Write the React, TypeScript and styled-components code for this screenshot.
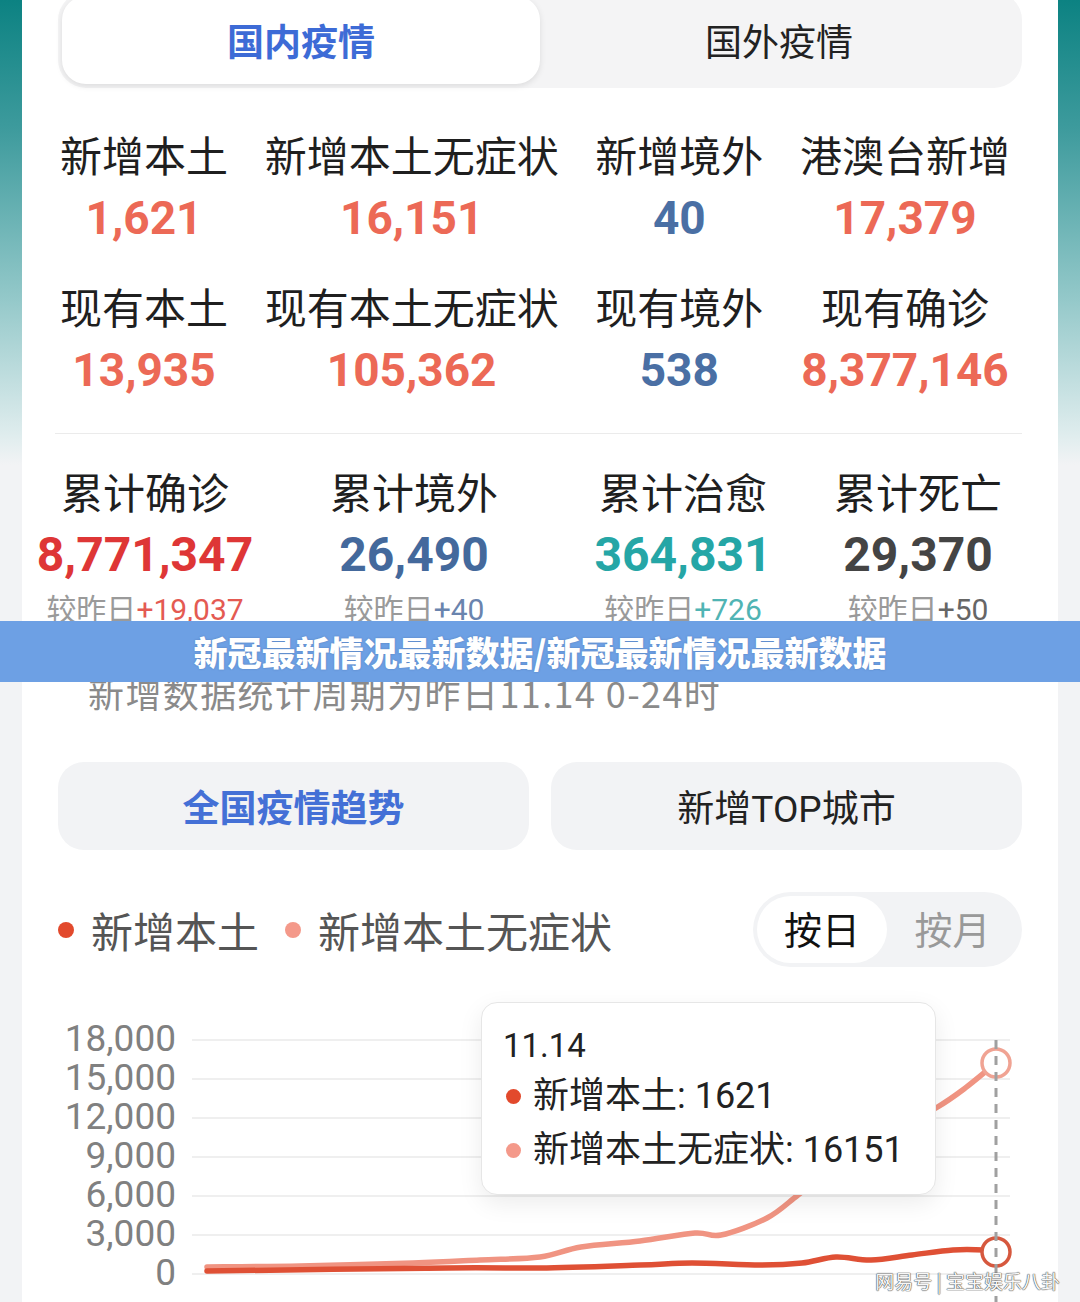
import React from 'react';
import styled, {createGlobalStyle} from 'styled-components';

const GlobalStyle = createGlobalStyle`
  html, body {
    margin: 0;
    padding: 0;
  }
  body {
    font-family: Roboto, "Noto Sans CJK SC", "Noto Sans", sans-serif;
    color: #222;
  }
`;

type Stat = {
    label: string
    value: string
    color: string
}

type Total = Stat & {
    diff: string
    diffColor: string
}

const today: Stat[] = [
    {label: '新增本土', value: '1,621', color: '#ec6956'},
    {label: '新增本土无症状', value: '16,151', color: '#ec6956'},
    {label: '新增境外', value: '40', color: '#4a6fa4'},
    {label: '港澳台新增', value: '17,379', color: '#ec6956'},
    {label: '现有本土', value: '13,935', color: '#ec6956'},
    {label: '现有本土无症状', value: '105,362', color: '#ec6956'},
    {label: '现有境外', value: '538', color: '#4a6fa4'},
    {label: '现有确诊', value: '8,377,146', color: '#ec6956'},
]

const totals: Total[] = [
    {label: '累计确诊', value: '8,771,347', color: '#de3636', diff: '+19,037', diffColor: '#e45a52'},
    {label: '累计境外', value: '26,490', color: '#44699c', diff: '+40', diffColor: '#6a84ae'},
    {label: '累计治愈', value: '364,831', color: '#25a6a6', diff: '+726', diffColor: '#50b4b4'},
    {label: '累计死亡', value: '29,370', color: '#444', diff: '+50', diffColor: '#666'},
]

const axis = ['18,000', '15,000', '12,000', '9,000', '6,000', '3,000', '0']

const lightPoints: [number, number][] = [
    [207, 1267], [300, 1266], [413, 1263], [480, 1260], [540, 1257], [581, 1247], [640, 1241],
    [695, 1233], [721, 1235], [767, 1218], [798, 1195], [830, 1170], [870, 1142], [905, 1124],
    [936, 1108], [964, 1089], [996, 1063],
]

const darkPoints: [number, number][] = [
    [207, 1271], [448, 1268], [540, 1268], [640, 1265], [692, 1263], [760, 1265], [802, 1263],
    [836, 1257], [871, 1260], [912, 1255], [953, 1250], [984, 1250], [996, 1252],
]

// catmull-rom -> bezier, keeps the lines soft like the chart lib does
const smoothPath = (pts: [number, number][]) => {
    let d = `M${pts[0][0]},${pts[0][1]}`
    for (let i = 0; i < pts.length - 1; i++) {
        const p0 = pts[i - 1] || pts[i]
        const p1 = pts[i]
        const p2 = pts[i + 1]
        const p3 = pts[i + 2] || p2
        const c1x = p1[0] + (p2[0] - p0[0]) / 6
        const c1y = p1[1] + (p2[1] - p0[1]) / 6
        const c2x = p2[0] - (p3[0] - p1[0]) / 6
        const c2y = p2[1] - (p3[1] - p1[1]) / 6
        d += ` C${c1x},${c1y} ${c2x},${c2y} ${p2[0]},${p2[1]}`
    }
    return d
}

export default function App() {
    return (
        <Page>
            <GlobalStyle/>
            <Column>
                <TabBar>
                    <Tab $active>国内疫情</Tab>
                    <Tab>国外疫情</Tab>
                </TabBar>

                <TodayGrid>
                    {today.map(s => (
                        <Cell key={s.label}>
                            <Label>{s.label}</Label>
                            <Value $color={s.color}>{s.value}</Value>
                        </Cell>
                    ))}
                </TodayGrid>

                <Divider/>

                <TotalGrid>
                    {totals.map(t => (
                        <Cell key={t.label}>
                            <Label>{t.label}</Label>
                            <Value $color={t.color} $big>{t.value}</Value>
                            <Diff>较昨日<DiffNum $color={t.diffColor}>{t.diff}</DiffNum></Diff>
                        </Cell>
                    ))}
                </TotalGrid>

                <Note>新增数据统计周期为昨日11.14 0-24时</Note>

                <ButtonRow>
                    <BigButton $active>全国疫情趋势</BigButton>
                    <BigButton>新增TOP城市</BigButton>
                </ButtonRow>

                <LegendRow>
                    <Legend>
                        <LegendItem>
                            <Dot $color={'#e2492c'}/>新增本土
                        </LegendItem>
                        <LegendItem>
                            <Dot $color={'#f4998a'}/>新增本土无症状
                        </LegendItem>
                    </Legend>
                    <Toggle>
                        <ToggleOption $active>按日</ToggleOption>
                        <ToggleOption>按月</ToggleOption>
                    </Toggle>
                </LegendRow>

                <ChartBox>
                    <svg width={1036} height={302} viewBox="22 1000 1036 302">
                        {axis.map((a, i) => {
                            const y = 1040 + i * 39
                            return (
                                <g key={a}>
                                    <line x1={192} x2={1010} y1={y} y2={y} stroke="#efefef" strokeWidth={2}/>
                                    <text x={176} y={y + 11} textAnchor="end" fontSize={37}
                                          fill="#808080" fontFamily="Roboto, sans-serif">{a}</text>
                                </g>
                            )
                        })}
                        <path d={smoothPath(lightPoints)} fill="none" stroke="#f09482" strokeWidth={5.5}
                              strokeLinecap="round" strokeLinejoin="round"/>
                        <path d={smoothPath(darkPoints)} fill="none" stroke="#df5035" strokeWidth={5.5}
                              strokeLinecap="round" strokeLinejoin="round"/>
                        <circle cx={996} cy={1063} r={14} fill="#fff" stroke="#f0a393" strokeWidth={3.5}/>
                        <circle cx={996} cy={1252} r={14} fill="#fff" stroke="#d6583e" strokeWidth={3.5}/>
                        <line x1={996} x2={996} y1={1040} y2={1302} stroke="#a0a0a0" strokeWidth={3}
                              strokeDasharray="9 7"/>
                    </svg>
                    <Tooltip>
                        <TipTitle>11.14</TipTitle>
                        <TipRow><TipDot $color={'#e2492c'}/>新增本土: 1621</TipRow>
                        <TipRow><TipDot $color={'#f4998a'}/>新增本土无症状: 16151</TipRow>
                    </Tooltip>
                </ChartBox>
            </Column>

            <Banner>新冠最新情况最新数据/新冠最新情况最新数据</Banner>
            <Watermark>网易号 | 宝宝娱乐八卦</Watermark>
        </Page>
    )
}

const Page = styled.div`
  position: relative;
  width: 1080px;
  height: 1302px;
  overflow: hidden;
  display: flex;
  justify-content: center;
  background: linear-gradient(180deg, #0c8282 0px, #3e9b9d 130px, #8fc6c7 290px, #e2eeef 440px, #f2f3f5 465px, #f2f3f5 100%);
`

const Column = styled.div`
  width: 1036px;
  height: 100%;
  background: #fff;
`

const TabBar = styled.div`
  display: flex;
  margin: -8px 36px 0;
  height: 96px;
  padding: 4px;
  box-sizing: border-box;
  border-radius: 28px;
  background: #f4f4f5;
`

const Tab = styled.div<{ $active?: boolean }>`
  flex: 1;
  display: flex;
  align-items: center;
  justify-content: center;
  border-radius: 24px;
  font-size: 37px;
  font-weight: ${p => p.$active ? 700 : 400};
  color: ${p => p.$active ? '#3d6bd6' : '#222'};
  background: ${p => p.$active ? '#fff' : 'transparent'};
  box-shadow: ${p => p.$active ? '0 2px 6px rgba(0, 0, 0, 0.1)' : 'none'};
`

const TodayGrid = styled.div`
  display: grid;
  grid-template-columns: repeat(4, auto);
  justify-content: space-between;
  row-gap: 32px;
  margin: 45px 48px 0 38px;
`

const TotalGrid = styled.div`
  display: grid;
  grid-template-columns: 246px 292px 246px 224px;
  margin-top: 36px;
`

const Cell = styled.div`
  display: flex;
  flex-direction: column;
  align-items: center;
`

const Label = styled.div`
  font-size: 42px;
  line-height: 50px;
  color: #1f1f1f;
  white-space: nowrap;
`

const Value = styled.div<{ $color: string, $big?: boolean }>`
  font-family: Roboto, "Noto Sans", sans-serif;
  font-weight: 700;
  font-size: ${p => p.$big ? 48 : 46}px;
  line-height: 70px;
  color: ${p => p.$color};
  white-space: nowrap;
`

const Diff = styled.div`
  font-size: 30px;
  line-height: 40px;
  color: #9a9a9a;
  white-space: nowrap;
`

const DiffNum = styled.span<{ $color: string }>`
  color: ${p => p.$color};
`

const Divider = styled.div`
  height: 1px;
  margin: 28px 36px 0 33px;
  background: #ebebeb;
`

const Note = styled.div`
  margin-top: 38px;
  padding-left: 66px;
  font-family: "Noto Sans CJK SC", sans-serif;
  font-size: 36px;
  line-height: 48px;
  letter-spacing: 1.4px;
  color: #8a8a8a;
`

const ButtonRow = styled.div`
  display: flex;
  gap: 22px;
  margin: 46px 36px 0;
`

const BigButton = styled.div<{ $active?: boolean }>`
  flex: 1;
  height: 88px;
  display: flex;
  align-items: center;
  justify-content: center;
  border-radius: 26px;
  background: #f2f3f5;
  font-size: 37px;
  font-weight: ${p => p.$active ? 700 : 400};
  color: ${p => p.$active ? '#4470d6' : '#222'};
`

const LegendRow = styled.div`
  display: flex;
  align-items: center;
  justify-content: space-between;
  margin: 42px 36px 0;
`

const Legend = styled.div`
  display: flex;
  align-items: center;
  gap: 26px;
`

const LegendItem = styled.div`
  display: flex;
  align-items: center;
  font-size: 42px;
  color: #555;
`

const Dot = styled.span<{ $color: string }>`
  width: 16px;
  height: 16px;
  border-radius: 50%;
  margin-right: 17px;
  background: ${p => p.$color};
`

const Toggle = styled.div`
  display: flex;
  width: 269px;
  height: 75px;
  padding: 4px;
  box-sizing: border-box;
  border-radius: 38px;
  background: #f2f3f5;
`

const ToggleOption = styled.div<{ $active?: boolean }>`
  flex: ${p => p.$active ? '0 0 130px' : 1};
  display: flex;
  align-items: center;
  justify-content: center;
  padding-bottom: 4px;
  border-radius: 34px;
  font-size: 38px;
  color: ${p => p.$active ? '#111' : '#999'};
  background: ${p => p.$active ? '#fff' : 'transparent'};
`

const ChartBox = styled.div`
  position: relative;
  margin-top: 33px;
  height: 302px;

  svg {
    display: block;
  }
`

const Tooltip = styled.div`
  position: absolute;
  left: 459px;
  top: 2px;
  width: 455px;
  height: 193px;
  box-sizing: border-box;
  padding: 20px 0 0 21px;
  background: #fff;
  border: 1px solid #e6e6e6;
  border-radius: 16px;
  box-shadow: 0 8px 24px rgba(0, 0, 0, 0.08);
`

const TipTitle = styled.div`
  font-size: 33px;
  line-height: 46px;
  color: #222;
`

const TipRow = styled.div`
  display: flex;
  align-items: center;
  font-size: 36px;
  line-height: 54px;
  color: #222;
`

const TipDot = styled.span<{ $color: string }>`
  width: 15px;
  height: 15px;
  margin: 0 12px 0 3px;
  border-radius: 50%;
  background: ${p => p.$color};
`

const Banner = styled.div`
  position: absolute;
  left: 0;
  right: 0;
  top: 621px;
  height: 61px;
  display: flex;
  align-items: center;
  justify-content: center;
  background: #6da0e4;
  color: #fff;
  font-family: "Noto Sans CJK SC", sans-serif;
  font-size: 34px;
  font-weight: 900;
  text-shadow: 0 0 2px rgba(40, 60, 110, 0.35);
`

const Watermark = styled.div`
  position: absolute;
  right: 20px;
  bottom: 8px;
  font-family: "Noto Sans CJK SC", sans-serif;
  font-size: 19px;
  color: #f7f7f7;
  text-shadow: 0 0 1px #555, 0 0 1px #555, 0 0 1px #555;
`
